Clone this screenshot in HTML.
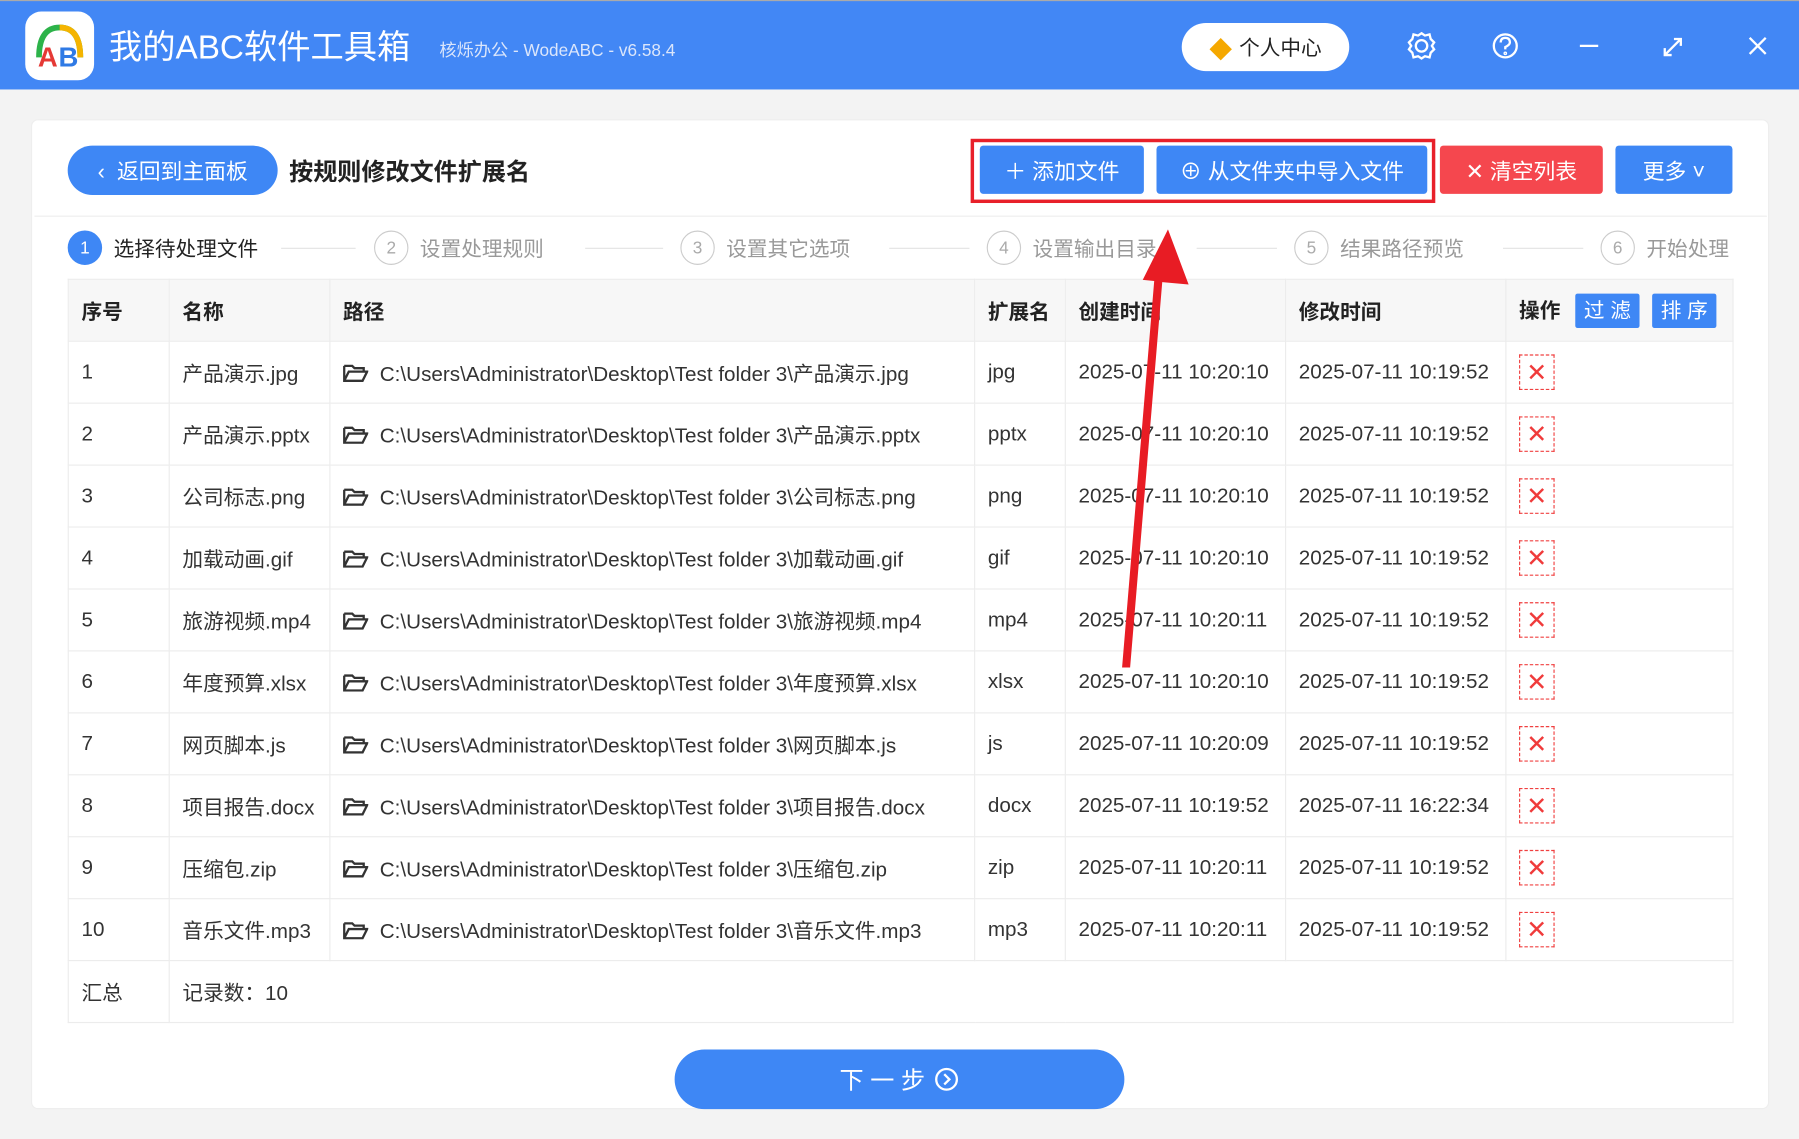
<!DOCTYPE html>
<html><head><meta charset="utf-8">
<style>
*{box-sizing:border-box;margin:0;padding:0}
html,body{width:1799px;height:1139px;overflow:hidden;background:#f3f3f3}
body{font-family:"Liberation Sans","Noto Sans CJK SC",sans-serif;color:#333}
#w{position:absolute;left:0;top:0;width:1568px;height:993px;transform:scale(1.14732,1.147);transform-origin:0 0;background:#f3f3f3}
.a{position:absolute}
.hdr{left:0;top:0;width:1568px;height:78px;background:#4287f5;border-top:1px solid #aaa}
.btn{position:absolute;color:#fff;font-size:19px;display:flex;align-items:center;justify-content:center;border-radius:3px}
.blue{background:#3e87f5}
table{border-collapse:collapse;position:absolute;left:59px;top:243px;width:1451px;font-size:18px;table-layout:fixed}
td,th{border:1px solid #ececec;height:54px;padding-left:11px;text-align:left;white-space:nowrap;overflow:hidden}
th{background:#f7f7f7;font-weight:bold;color:#222}
.x{display:inline-block;width:31px;height:31px;border:1px dashed #f04040;color:#f03b3b;font-size:22px;text-align:center;line-height:29px}
.fd{display:inline-block;vertical-align:-1px;margin-right:10px}
.st{position:absolute;top:201px;height:30px;display:flex;align-items:center;font-size:18px;color:#999}
.c{width:30px;height:30px;border-radius:50%;border:1.5px solid #ccc;display:flex;align-items:center;justify-content:center;font-size:15px;margin-right:10px;color:#aaa}
.ln{position:absolute;top:216px;height:1px;background:#e4e4e4}
</style></head><body><div id="w">
<div class="a hdr"></div>
<div class="a" style="left:22px;top:10px;width:60px;height:60px;background:#fff;border-radius:14px"></div>
<svg class="a" style="left:22px;top:10px" width="60" height="60" viewBox="0 0 60 60">
<path d="M12 40 Q12 14 30 14 Q48 14 48 40" fill="none" stroke="#2db34a" stroke-width="5"/>
<path d="M30 14 Q48 14 48 40" fill="none" stroke="#f5b400" stroke-width="5"/>
<text x="11" y="48" font-size="24" font-weight="bold" fill="#e53935" font-family="Liberation Sans">A</text>
<text x="29" y="48" font-size="24" font-weight="bold" fill="#2f7ae5" font-family="Liberation Sans">B</text></svg>
<div class="a" style="left:95px;top:21px;font-size:29px;color:#fff;line-height:42px">我的ABC软件工具箱</div>
<div class="a" style="left:383px;top:33px;font-size:15px;color:#dbe6fb">核烁办公 - WodeABC - v6.58.4</div>
<div class="a" style="left:1030px;top:20px;width:146px;height:42px;background:#fff;border-radius:21px;display:flex;align-items:center;justify-content:center;font-size:18px;color:#222"><span style="color:#f5a800;font-size:20px;margin-right:6px">◆</span>个人中心</div>
<svg class="a" style="left:1225px;top:26px" width="320" height="30" viewBox="0 0 320 30" fill="none" stroke="#fff" stroke-width="2">
<circle cx="14" cy="14" r="5"/><path d="M14 3 L17 5 L21 4 L22 8 L25 11 L23 14 L25 17 L22 20 L21 24 L17 23 L14 25 L11 23 L7 24 L6 20 L3 17 L5 14 L3 11 L6 8 L7 4 L11 5 Z"/>
<circle cx="87" cy="14" r="10"/><path d="M83 11 Q83 7 87 7 Q91 7 91 11 Q91 13 87 15 L87 17"/><circle cx="87" cy="20.5" r=".6"/>
<path d="M152 14 H168"/><path d="M226 22 L240 8 M234 8 H240 V14 M226 16 V22 H232"/><path d="M300 7 L314 21 M314 7 L300 21"/></svg>
<div class="a" style="left:27px;top:104px;width:1515px;height:863px;background:#fff;border-radius:6px;border:1px solid #eee"></div>
<div class="btn blue" style="left:59px;top:127px;width:183px;height:43px;border-radius:22px">‹&nbsp;&nbsp;返回到主面板</div>
<div class="a" style="left:252px;top:134px;font-size:21px;font-weight:bold;color:#222">按规则修改文件扩展名</div>
<div class="a" style="left:846px;top:121px;width:405px;height:56px;border:3px solid #e8202a"></div>
<div class="btn blue" style="left:854px;top:127px;width:143px;height:42px">＋ 添加文件</div>
<div class="btn blue" style="left:1008px;top:127px;width:236px;height:42px">⊕ 从文件夹中导入文件</div>
<div class="btn" style="left:1255px;top:127px;width:142px;height:42px;background:#f5474e">✕ 清空列表</div>
<div class="btn blue" style="left:1408px;top:127px;width:102px;height:42px">更多 ˅</div>
<div class="a" style="left:30px;top:188px;width:1510px;height:1px;background:#eee"></div>
<div class="st" style="left:59px;color:#222"><div class="c" style="background:#3e87f5;border-color:#3e87f5;color:#fff">1</div>选择待处理文件</div>
<div class="ln" style="left:245px;width:65px"></div>
<div class="st" style="left:326px"><div class="c">2</div>设置处理规则</div>
<div class="ln" style="left:510px;width:68px"></div>
<div class="st" style="left:593px"><div class="c">3</div>设置其它选项</div>
<div class="ln" style="left:775px;width:70px"></div>
<div class="st" style="left:860px"><div class="c">4</div>设置输出目录</div>
<div class="ln" style="left:1043px;width:70px"></div>
<div class="st" style="left:1128px"><div class="c">5</div>结果路径预览</div>
<div class="ln" style="left:1310px;width:70px"></div>
<div class="st" style="left:1395px"><div class="c">6</div>开始处理</div>
<table>
<colgroup><col style="width:88px"><col style="width:140px"><col style="width:562px"><col style="width:79px"><col style="width:192px"><col style="width:192px"><col style="width:198px"></colgroup>
<tr><th>序号</th><th>名称</th><th>路径</th><th>扩展名</th><th>创建时间</th><th>修改时间</th><th>操作 <span style="display:inline-block;background:#3e87f5;color:#fff;font-weight:normal;width:56px;height:30px;line-height:30px;text-align:center;margin-left:8px;border-radius:2px">过 滤</span> <span style="display:inline-block;background:#3e87f5;color:#fff;font-weight:normal;width:56px;height:30px;line-height:30px;text-align:center;margin-left:6px;border-radius:2px">排 序</span></th></tr>
<tr><td>1</td><td>产品演示.jpg</td><td><svg class="fd" width="22" height="16"><path d="M1 2h7l2 2h8v3M1 2v13h16l4-8H5L1 15" fill="none" stroke="#333" stroke-width="2"/></svg>C:\Users\Administrator\Desktop\Test folder 3\产品演示.jpg</td><td>jpg</td><td>2025-07-11 10:20:10</td><td>2025-07-11 10:19:52</td><td><span class="x">✕</span></td></tr>
<tr><td>2</td><td>产品演示.pptx</td><td><svg class="fd" width="22" height="16"><path d="M1 2h7l2 2h8v3M1 2v13h16l4-8H5L1 15" fill="none" stroke="#333" stroke-width="2"/></svg>C:\Users\Administrator\Desktop\Test folder 3\产品演示.pptx</td><td>pptx</td><td>2025-07-11 10:20:10</td><td>2025-07-11 10:19:52</td><td><span class="x">✕</span></td></tr>
<tr><td>3</td><td>公司标志.png</td><td><svg class="fd" width="22" height="16"><path d="M1 2h7l2 2h8v3M1 2v13h16l4-8H5L1 15" fill="none" stroke="#333" stroke-width="2"/></svg>C:\Users\Administrator\Desktop\Test folder 3\公司标志.png</td><td>png</td><td>2025-07-11 10:20:10</td><td>2025-07-11 10:19:52</td><td><span class="x">✕</span></td></tr>
<tr><td>4</td><td>加载动画.gif</td><td><svg class="fd" width="22" height="16"><path d="M1 2h7l2 2h8v3M1 2v13h16l4-8H5L1 15" fill="none" stroke="#333" stroke-width="2"/></svg>C:\Users\Administrator\Desktop\Test folder 3\加载动画.gif</td><td>gif</td><td>2025-07-11 10:20:10</td><td>2025-07-11 10:19:52</td><td><span class="x">✕</span></td></tr>
<tr><td>5</td><td>旅游视频.mp4</td><td><svg class="fd" width="22" height="16"><path d="M1 2h7l2 2h8v3M1 2v13h16l4-8H5L1 15" fill="none" stroke="#333" stroke-width="2"/></svg>C:\Users\Administrator\Desktop\Test folder 3\旅游视频.mp4</td><td>mp4</td><td>2025-07-11 10:20:11</td><td>2025-07-11 10:19:52</td><td><span class="x">✕</span></td></tr>
<tr><td>6</td><td>年度预算.xlsx</td><td><svg class="fd" width="22" height="16"><path d="M1 2h7l2 2h8v3M1 2v13h16l4-8H5L1 15" fill="none" stroke="#333" stroke-width="2"/></svg>C:\Users\Administrator\Desktop\Test folder 3\年度预算.xlsx</td><td>xlsx</td><td>2025-07-11 10:20:10</td><td>2025-07-11 10:19:52</td><td><span class="x">✕</span></td></tr>
<tr><td>7</td><td>网页脚本.js</td><td><svg class="fd" width="22" height="16"><path d="M1 2h7l2 2h8v3M1 2v13h16l4-8H5L1 15" fill="none" stroke="#333" stroke-width="2"/></svg>C:\Users\Administrator\Desktop\Test folder 3\网页脚本.js</td><td>js</td><td>2025-07-11 10:20:09</td><td>2025-07-11 10:19:52</td><td><span class="x">✕</span></td></tr>
<tr><td>8</td><td>项目报告.docx</td><td><svg class="fd" width="22" height="16"><path d="M1 2h7l2 2h8v3M1 2v13h16l4-8H5L1 15" fill="none" stroke="#333" stroke-width="2"/></svg>C:\Users\Administrator\Desktop\Test folder 3\项目报告.docx</td><td>docx</td><td>2025-07-11 10:19:52</td><td>2025-07-11 16:22:34</td><td><span class="x">✕</span></td></tr>
<tr><td>9</td><td>压缩包.zip</td><td><svg class="fd" width="22" height="16"><path d="M1 2h7l2 2h8v3M1 2v13h16l4-8H5L1 15" fill="none" stroke="#333" stroke-width="2"/></svg>C:\Users\Administrator\Desktop\Test folder 3\压缩包.zip</td><td>zip</td><td>2025-07-11 10:20:11</td><td>2025-07-11 10:19:52</td><td><span class="x">✕</span></td></tr>
<tr><td>10</td><td>音乐文件.mp3</td><td><svg class="fd" width="22" height="16"><path d="M1 2h7l2 2h8v3M1 2v13h16l4-8H5L1 15" fill="none" stroke="#333" stroke-width="2"/></svg>C:\Users\Administrator\Desktop\Test folder 3\音乐文件.mp3</td><td>mp3</td><td>2025-07-11 10:20:11</td><td>2025-07-11 10:19:52</td><td><span class="x">✕</span></td></tr>
<tr><td style="height:49px">汇总</td><td colspan="6">记录数：10</td></tr>
</table>
<svg class="a" style="left:0;top:0" width="1568" height="993"><polygon points="978,582 985,582 1013,246 1036,248 1018,200 996,244 1006,245" fill="#e81c24"/></svg>
<div class="btn blue" style="left:588px;top:915px;width:392px;height:52px;border-radius:26px;font-size:21px">下 一 步 <svg width="22" height="22" style="margin-left:8px" fill="none" stroke="#fff" stroke-width="2"><circle cx="11" cy="11" r="9"/><path d="M9 6.5 L13.5 11 L9 15.5"/></svg></div>
</div></body></html>
